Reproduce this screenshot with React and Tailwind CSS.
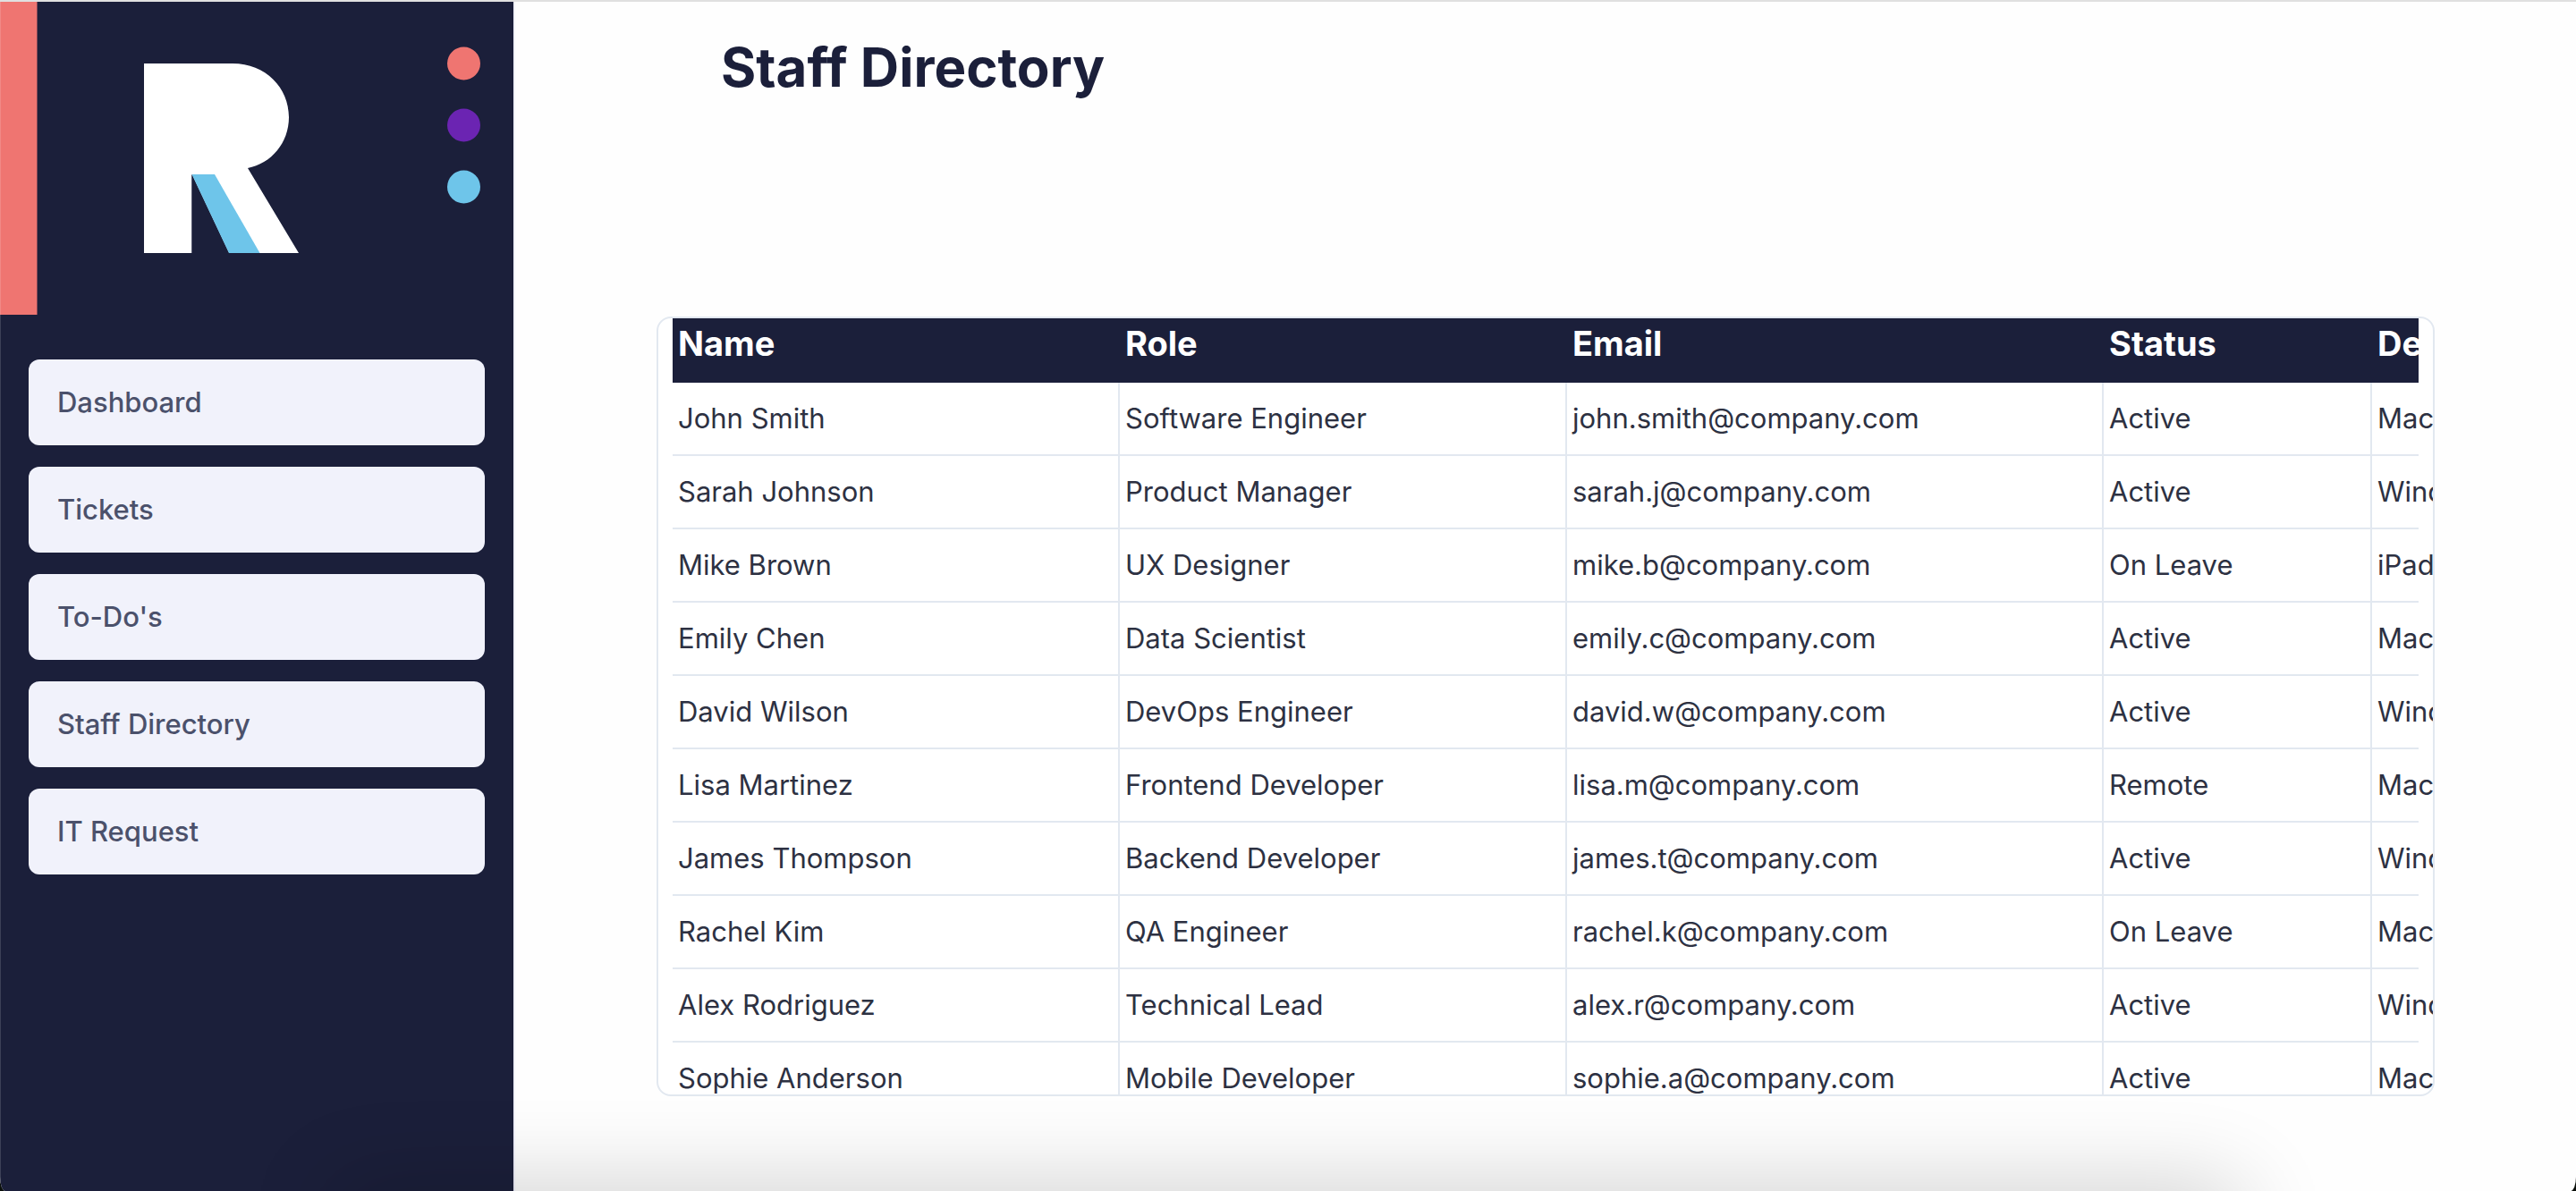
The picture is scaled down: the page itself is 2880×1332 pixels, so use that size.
const navItems = ["Dashboard", "Tickets", "To-Do's", "Staff Directory", "IT Request"];

const columns = ["Name", "Role", "Email", "Status", "Device"];

const staff = [
  ["John Smith", "Software Engineer", "john.smith@company.com", "Active", "MacBook Pro"],
  ["Sarah Johnson", "Product Manager", "sarah.j@company.com", "Active", "Windows PC"],
  ["Mike Brown", "UX Designer", "mike.b@company.com", "On Leave", "iPad Pro"],
  ["Emily Chen", "Data Scientist", "emily.c@company.com", "Active", "MacBook Pro"],
  ["David Wilson", "DevOps Engineer", "david.w@company.com", "Active", "Windows PC"],
  ["Lisa Martinez", "Frontend Developer", "lisa.m@company.com", "Remote", "MacBook Air"],
  ["James Thompson", "Backend Developer", "james.t@company.com", "Active", "Windows PC"],
  ["Rachel Kim", "QA Engineer", "rachel.k@company.com", "On Leave", "MacBook Pro"],
  ["Alex Rodriguez", "Technical Lead", "alex.r@company.com", "Active", "Windows PC"],
  ["Sophie Anderson", "Mobile Developer", "sophie.a@company.com", "Active", "MacBook Pro"],
];

function Logo() {
  return (
    <svg viewBox="0 0 574 350" className="block w-full" role="img" aria-label="R logo">
      <rect width="41.5" height="350" fill="#ef7571" />
      <path
        d="M161 69H260C297 69 323 96 323 129C323 158 303 181 277 186L334 281H256L214.500 193V281H161Z"
        fill="#fff"
      />
      <path d="M214.500 193V281H256Z" fill="#1b1f3a" />
      <path d="M214.500 193H240L290.500 281H256Z" fill="#6ec5ea" />
      <circle cx="518.500" cy="69" r="18.500" fill="#ef7571" />
      <circle cx="518.500" cy="138" r="18.500" fill="#6b24b2" />
      <circle cx="518.500" cy="207" r="18.500" fill="#6ec5ea" />
    </svg>
  );
}

function Sidebar() {
  return (
    <aside className="w-[576px] shrink-0 border-r-2 border-[#f1f1fb] bg-[#1b1f3a]">
      <Logo />
      <nav className="flex flex-col gap-6 px-8 pt-[50px]">
        {navItems.map((item) => (
          <a
            key={item}
            href="#"
            className="rounded-xl bg-[#f1f2fb] px-8 py-6 text-[31px] leading-[48px] font-medium text-[#4b516b]"
          >
            {item}
          </a>
        ))}
      </nav>
    </aside>
  );
}

function StaffTable() {
  return (
    <table className="w-full table-fixed border-separate border-spacing-0 text-left whitespace-nowrap">
      <colgroup>
        <col className="w-[500px]" />
        <col className="w-[500px]" />
        <col className="w-[600px]" />
        <col className="w-[300px]" />
        <col />
      </colgroup>
      <thead>
        <tr className="bg-[#1b1f3a] text-[38px] leading-[56px] text-white">
          {columns.map((c) => (
            <th key={c} scope="col" className="px-1.5 pt-0 pb-4 font-bold">
              {c}
            </th>
          ))}
        </tr>
      </thead>
      <tbody className="text-[31px] leading-[48px] text-[#2d3142]">
        {staff.map((row) => (
          <tr key={row[0]}>
            {row.map((cell, i) => (
              <td
                key={i}
                className="border-r-2 border-b-2 border-slate-200 px-1.5 py-4 last:border-r-0"
              >
                {cell}
              </td>
            ))}
          </tr>
        ))}
      </tbody>
    </table>
  );
}

export default function App() {
  return (
    <div className="bg-[#0b100b]">
      <div className="relative flex h-screen overflow-hidden rounded-[0_0_6px_6px/0_0_16px_16px] border-t-2 border-[#e0e0e0] bg-[#fefefe] font-['Inter',sans-serif]">
        <Sidebar />
        <main className="flex min-w-0 flex-1 flex-col px-[158px] pt-[30px] pb-[106px]">
          <h1 className="px-[72px] text-[60px] leading-[86px] font-bold text-[#1b1f3a]">Staff Directory</h1>
          <section className="mt-[236px] min-h-0 flex-1 overflow-hidden rounded-2xl border-2 border-slate-200 bg-white px-4">
            <StaffTable />
          </section>
        </main>
        <div className="pointer-events-none absolute inset-y-0 left-0 w-px bg-white/15" />
        <div className="pointer-events-none absolute right-[400px] bottom-[-60px] left-[400px] h-[40px] shadow-[0_0_100px_24px_rgba(0,0,0,0.2)]" />
      </div>
    </div>
  );
}
